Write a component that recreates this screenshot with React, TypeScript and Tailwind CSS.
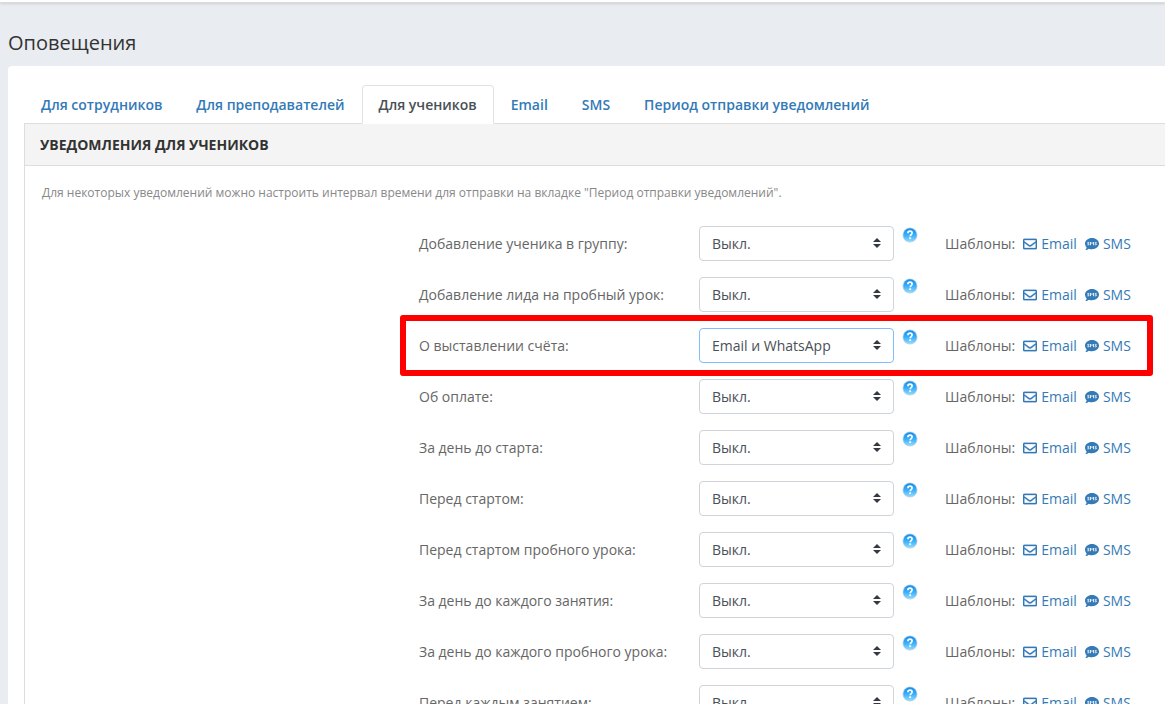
import { FaRegEnvelope } from "react-icons/fa";

const tabs = [
  "Для сотрудников",
  "Для преподавателей",
  "Для учеников",
  "Email",
  "SMS",
  "Период отправки уведомлений",
];

const activeTab = "Для учеников";

const channels = ["Выкл.", "Email", "SMS", "WhatsApp", "Email и WhatsApp"];

interface Notification {
  id: string;
  label: string;
  value: string;
  highlighted?: boolean;
}

const notifications: Notification[] = [
  { id: "group-add", label: "Добавление ученика в группу:", value: "Выкл." },
  { id: "lead-trial", label: "Добавление лида на пробный урок:", value: "Выкл." },
  { id: "invoice", label: "О выставлении счёта:", value: "Email и WhatsApp", highlighted: true },
  { id: "payment", label: "Об оплате:", value: "Выкл." },
  { id: "day-before-start", label: "За день до старта:", value: "Выкл." },
  { id: "before-start", label: "Перед стартом:", value: "Выкл." },
  { id: "before-trial", label: "Перед стартом пробного урока:", value: "Выкл." },
  { id: "day-before-lesson", label: "За день до каждого занятия:", value: "Выкл." },
  { id: "day-before-trial", label: "За день до каждого пробного урока:", value: "Выкл." },
  { id: "before-lesson", label: "Перед каждым занятием:", value: "Выкл." },
];

function HelpIcon() {
  return (
    <svg viewBox="0 0 16 16" className="size-4" aria-hidden="true">
      <defs>
        <linearGradient id="help-fill" x1="0" y1="0" x2="0" y2="1">
          <stop offset="0" stopColor="#0d8df0" />
          <stop offset="0.5" stopColor="#3aaefb" />
          <stop offset="1" stopColor="#8bdcff" />
        </linearGradient>
      </defs>
      <circle cx="8" cy="8" r="7.5" fill="#c3d3df" />
      <circle cx="8" cy="8" r="6.7" fill="url(#help-fill)" />
      <path
        d="M5.9 6.2C5.9 4.9 6.8 4.2 8 4.2s2.1.7 2.1 1.9c0 1.5-1.9 1.5-1.9 3.1"
        fill="none"
        stroke="#fff"
        strokeWidth="1.7"
      />
      <rect x="7.2" y="10.3" width="1.9" height="1.8" fill="#fff" />
    </svg>
  );
}

function SmsIcon() {
  return (
    <svg viewBox="0 0 14 14" className="size-[14px]" aria-hidden="true">
      <path
        d="M7 .9c3.9 0 7 2.5 7 5.7s-3.1 5.7-7 5.7c-1.1 0-2.2-.2-3.1-.6C2.900 12.500 1.700 13.100.3 13.100c.7-.8 1.200-1.700 1.300-2.700C.6 9.400 0 8.100 0 6.600 0 3.400 3.100.9 7 .9z"
        fill="currentColor"
      />
      <path
        d="M4.300 5.400H3.200Q2.600 5.400 2.600 5.900t.6.700h.4q.6 0 .6.600t-.6.600H2.400M5.500 8.200V5.100L7 6.600l1.500-1.500v3.100M11.600 5.400h-1.100q-.6 0-.6.500t.6.700h.4q.6 0 .6.600t-.6.600H9.700"
        fill="none"
        stroke="#fff"
        strokeWidth="0.85"
      />
    </svg>
  );
}

function SortArrows() {
  return (
    <svg
      viewBox="0 0 8 10"
      className="pointer-events-none absolute top-3 right-[13px] h-[10px] w-2"
      aria-hidden="true"
    >
      <path d="M4 0 8 4H0zM4 10 0 6h8z" fill="#343a40" />
    </svg>
  );
}

function NotificationRow({ item }: { item: Notification }) {
  return (
    <div className="relative grid grid-cols-[minmax(0,1fr)_280px_195px_51px_220px] items-center">
      <label htmlFor={item.id} className="col-start-2">
        {item.label}
      </label>
      <div className="relative">
        <select
          id={item.id}
          defaultValue={item.value}
          className={`block h-[35px] w-full appearance-none rounded-[4px] border bg-white pr-7 pl-3 text-[#495057] outline-none ${
            item.highlighted ? "border-[#80bdff]" : "border-[#ced4da]"
          }`}
        >
          {channels.map((channel) => (
            <option key={channel}>{channel}</option>
          ))}
        </select>
        <SortArrows />
      </div>
      <button type="button" aria-label="Справка" className="mt-px ml-2 size-4 self-start">
        <HelpIcon />
      </button>
      <div className="flex items-center gap-2">
        <span>Шаблоны:</span>
        <a href="#email" className="flex items-center gap-1 text-[#337ab7]">
          <FaRegEnvelope className="size-[14px]" stroke="currentColor" strokeWidth="10" />
          Email
        </a>
        <a href="#sms" className="flex items-center gap-1 text-[#337ab7]">
          <SmsIcon />
          SMS
        </a>
      </div>
      {item.highlighted && (
        <div className="pointer-events-none absolute -top-[13px] right-3 -bottom-[13px] w-[753px] rounded-[3px] border-6 border-[#ff0000]" />
      )}
    </div>
  );
}

export default function App() {
  return (
    <div className="flex h-screen flex-col overflow-hidden bg-[#e9ecf1] font-['Open_Sans','Noto_Sans',sans-serif] text-sm text-[#666666]">
      <header className="h-[3px] shrink-0 border-b border-[#d9dce1] bg-white shadow-sm" />
      <main className="flex-1 pl-2">
        <h1 className="pt-[26px] pb-[9px] text-xl text-[#333333]">Оповещения</h1>
        <div className="min-h-screen rounded-tl-[4px] bg-white pt-[19px] pl-4">
          <nav className="flex" aria-label="Разделы оповещений">
            {tabs.map((tab) => (
              <a
                key={tab}
                href="#tab"
                aria-current={tab === activeTab ? "page" : undefined}
                className={`relative z-10 -mb-px rounded-t-[4px] border px-4 pt-[9px] pb-2 font-semibold whitespace-nowrap ${
                  tab === activeTab
                    ? "border-[#dee2e6] border-b-white bg-white text-[#495057]"
                    : "border-transparent text-[#337ab7]"
                }`}
              >
                {tab}
              </a>
            ))}
          </nav>
          <section className="min-h-screen border-t border-l border-[#dddddd]">
            <h2 className="border-b border-[#dddddd] bg-[#f4f4f4] px-[15px] pt-[11px] pb-[10px] leading-5 font-bold text-[#333333] uppercase">
              Уведомления для учеников
            </h2>
            <p className="px-[17px] pt-[19px] text-xs text-[#888888]">
              Для некоторых уведомлений можно настроить интервал времени для отправки на вкладке
              "Период отправки уведомлений".
            </p>
            <form className="flex flex-col gap-4 pt-[25px]">
              {notifications.map((item) => (
                <NotificationRow key={item.id} item={item} />
              ))}
            </form>
          </section>
        </div>
      </main>
    </div>
  );
}
